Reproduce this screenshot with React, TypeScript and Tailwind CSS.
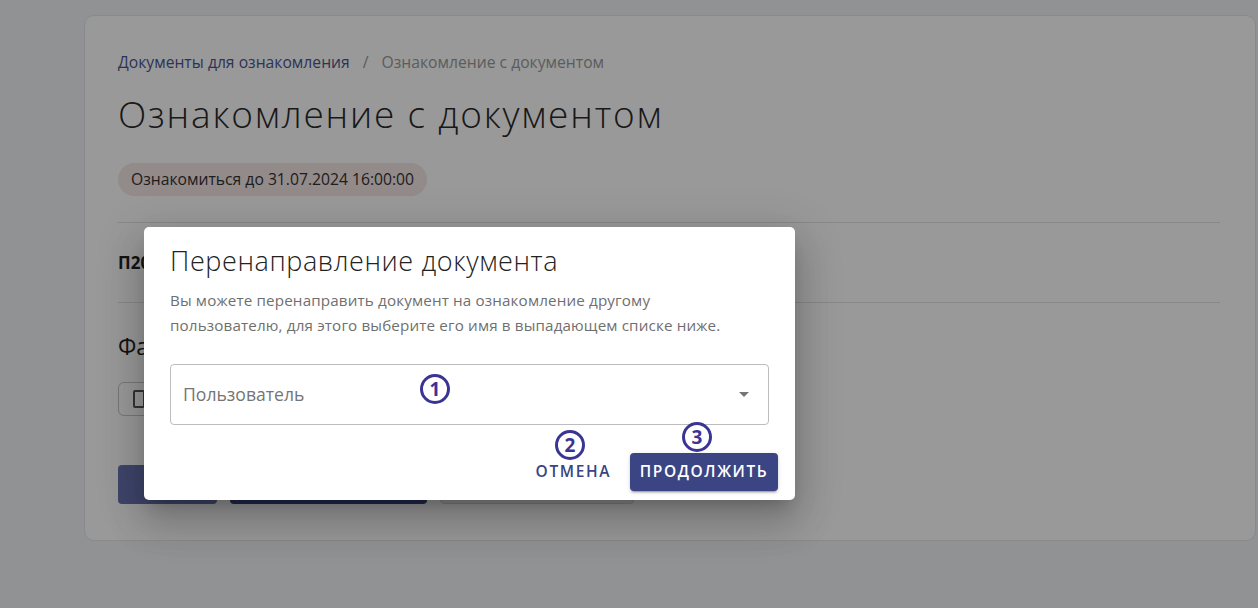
import React from "react";

function Mark({ n, className }: { n: string; className: string }) {
  return (
    <div
      className={`absolute w-[30px] h-[30px] rounded-full border-[3px] border-[#3a3494] flex items-center justify-center text-[#3a3494] font-bold text-[19px] leading-none ${className}`}
      style={{ fontFamily: "'Open Sans', sans-serif" }}
    >
      {n}
    </div>
  );
}

export default function App() {
  return (
    <div
      className="relative w-[1258px] h-[608px] overflow-hidden bg-[#f2f3f6]"
      style={{ fontFamily: "'Open Sans', 'Noto Sans', sans-serif" }}
    >
      <div className="pt-[15px] pl-[84px] pr-[2px]">
        <div className="h-[526px] bg-white rounded-[10px] border border-[#e6e6ea] pl-[33px] pr-[35px] pt-[36px]">
          <div className="flex items-center text-[15.7px] leading-[20px]">
            <span className="text-[#4b5690]">Документы для ознакомления</span>
            <span className="mx-[13px] text-[#9a9a9a]">/</span>
            <span className="text-[#9a9a9a]">Ознакомление с документом</span>
          </div>
          <h1 className="mt-[18px] text-[37px] leading-[48px] font-light tracking-[1.8px] text-[#2a2a2a]">
            Ознакомление с документом
          </h1>
          <div className="mt-[25px] inline-flex items-center h-[33px] px-[13px] rounded-full bg-[#f6e6e6] text-[15.7px] text-[#333]">
            Ознакомиться до 31.07.2024 16:00:00
          </div>
          <div className="mt-[26px] border-t border-[#e3e3e3]" />
          <div className="h-[79px] flex items-center text-[17px] font-bold text-[#222]">
            П2024-0001 Положение о документообороте
          </div>
          <div className="border-t border-[#e3e3e3]" />
          <div className="mt-[28px] text-[23px] leading-[30px] font-medium text-[#222]">Файлы</div>
          <div className="mt-[21px] w-[260px] h-[34px] rounded-[6px] border border-[#c9c9c9] flex items-center px-[14px] gap-2">
            <div className="w-[12px] h-[18px] border-2 border-[#555] rounded-[2px]" />
            <span className="text-[14px] text-[#333]">Положение.pdf</span>
          </div>
          <div className="mt-[49px] flex gap-[13px]">
            <div className="w-[99px] h-[39px] rounded-[4px] bg-[#6a74b2] text-white text-[14px] flex items-center justify-center">
              Назад
            </div>
            <div className="w-[197px] h-[39px] rounded-[4px] bg-[#3a4480] text-white text-[14px] flex items-center justify-center">
              Ознакомлен
            </div>
            <div className="w-[194px] h-[39px] rounded-[4px] bg-[#ececf0] border border-[#d5d5d8] text-[#555] text-[14px] flex items-center justify-center">
              Перенаправить
            </div>
          </div>
        </div>
      </div>

      <div className="absolute inset-0 bg-black/40" />

      <div className="absolute left-[144px] top-[227px] w-[651px] h-[273px] bg-white rounded-[5px] shadow-[0_11px_15px_-7px_rgba(0,0,0,0.2),0_24px_38px_3px_rgba(0,0,0,0.14),0_9px_46px_8px_rgba(0,0,0,0.12)] pl-[26px] pr-[17px] pt-[17px]">
        <div className="text-[27px] leading-[34px] font-light tracking-[0.6px] text-[#222]">Перенаправление документа</div>
        <div className="mt-[10px] pr-[20px] text-[15.2px] leading-[25px] tracking-[0.15px] text-[#6f6f6f]">
          Вы можете перенаправить документ на ознакомление другому
          <br />
          пользователю, для этого выберите его имя в выпадающем списке ниже.
        </div>
        <div className="mt-[26px] mr-[9px] h-[61px] rounded-[4px] border border-[#bdbdbd] flex items-center pl-[12px] pr-[19px]">
          <span className="flex-1 text-[17.6px] text-[#757575]">Пользователь</span>
          <svg width="10" height="5" viewBox="0 0 10 5">
            <path d="M0 0 L10 0 L5 5 Z" fill="#757575" />
          </svg>
        </div>
        <div className="mt-[28px] flex justify-end items-center gap-[11px]">
          <div className="h-[38px] px-[8px] flex items-center text-[15.5px] font-semibold tracking-[1.6px] text-[#3a4582]">
            ОТМЕНА
          </div>
          <div className="w-[148px] h-[38px] rounded-[4px] bg-[#3b4583] shadow-[0_3px_1px_-2px_rgba(0,0,0,0.2),0_2px_2px_0_rgba(0,0,0,0.14),0_1px_5px_0_rgba(0,0,0,0.12)] flex items-center justify-center text-[15.5px] font-semibold tracking-[1.6px] text-white">
            ПРОДОЛЖИТЬ
          </div>
        </div>
        <Mark n="1" className="left-[276px] top-[147px]" />
        <Mark n="2" className="left-[411px] top-[203px]" />
        <Mark n="3" className="left-[538px] top-[195px]" />
      </div>
    </div>
  );
}
